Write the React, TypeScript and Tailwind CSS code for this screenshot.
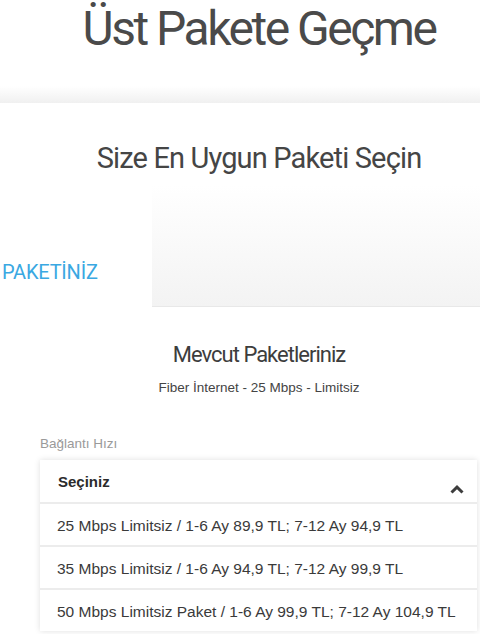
import { useState } from 'react'

const HEAD_FONT = "font-['Roboto','Noto_Sans',sans-serif]"
const BODY_FONT = "font-['Liberation_Sans',Arial,sans-serif]"

const PACKAGES = [
  '25 Mbps Limitsiz / 1-6 Ay 89,9 TL; 7-12 Ay 94,9 TL',
  '35 Mbps Limitsiz / 1-6 Ay 94,9 TL; 7-12 Ay 99,9 TL',
  '50 Mbps Limitsiz Paket / 1-6 Ay 99,9 TL; 7-12 Ay 104,9 TL',
]

function ChevronUp() {
  return (
    <svg width="14" height="9" viewBox="0 0 14 9" className="mt-[12px]">
      <path d="M1.5 7.5 L7 2.2 L12.5 7.5" fill="none" stroke="#3d3d3d" strokeWidth="3" strokeLinejoin="miter" />
    </svg>
  )
}

function SpeedSelect() {
  const [open, setOpen] = useState(true)
  const [value, setValue] = useState<string | null>(null)

  return (
    <div className="ml-[40px] mr-[3px] bg-white shadow-[0_0_6px_rgba(0,0,0,0.13)]">
      <button
        type="button"
        onClick={() => setOpen(!open)}
        className="flex h-[42px] w-full items-start justify-between pl-[18px] pr-[13px] pt-[13px] text-left"
      >
        <span className={`${BODY_FONT} text-[15px] font-bold leading-[17px] text-[#2b2b2b]`}>
          {value ?? 'Seçiniz'}
        </span>
        <ChevronUp />
      </button>
      {open &&
        PACKAGES.map((pkg) => (
          <div
            key={pkg}
            onClick={() => setValue(pkg)}
            className={`${BODY_FONT} flex h-[43px] items-center border-t-2 border-[#ececec] pl-[17px] pt-[3px] text-[15.5px] text-[#3a3a3a]`}
          >
            {pkg}
          </div>
        ))}
    </div>
  )
}

export default function App() {
  return (
    <div className="w-[480px] h-[634px] overflow-hidden bg-white">
      {/* page title */}
      <h1 className={`${HEAD_FONT} pl-[38px] pt-[1px] text-center text-[48px] leading-[56px] tracking-[-2.5px] text-[#4a4a4a]`}>
        Üst Pakete Geçme
      </h1>
      <div className="mt-[29px] h-[17px] bg-gradient-to-b from-white to-[#f0f0f0]" />

      {/* package picker */}
      <section className="pt-[37px]">
        <h2 className={`${HEAD_FONT} pl-[38px] text-center text-[29px] leading-[36px] tracking-[-0.85px] text-[#454545]`}>
          Size En Uygun Paketi Seçin
        </h2>
        <div className="mt-[9px] flex h-[122px] items-end">
          <div className="w-[152px] pb-[22px] pl-[2px]">
            <span className={`${HEAD_FONT} text-[20px] leading-[24px] tracking-[-0.2px] text-[#3aa8e2]`}>PAKETİNİZ</span>
          </div>
          <div className="h-full flex-1 border-b border-[#e8e8e8] bg-gradient-to-b from-white to-[#f3f3f3]" />
        </div>

        <h3 className={`${HEAD_FONT} mt-[34px] pl-[38px] text-center text-[22px] leading-[28px] tracking-[-1px] text-[#3d3d3d]`}>
          Mevcut Paketleriniz
        </h3>
        <p className={`${BODY_FONT} mt-[11px] pl-[38px] text-center text-[13.5px] leading-[16px] text-[#444]`}>
          Fiber İnternet - 25 Mbps - Limitsiz
        </p>

        <p className={`${BODY_FONT} mt-[40px] pl-[40px] text-[13.5px] leading-[16px] text-[#9a9a9a]`}>Bağlantı Hızı</p>
        <div className="mt-[8px]">
          <SpeedSelect />
        </div>
      </section>
    </div>
  )
}
